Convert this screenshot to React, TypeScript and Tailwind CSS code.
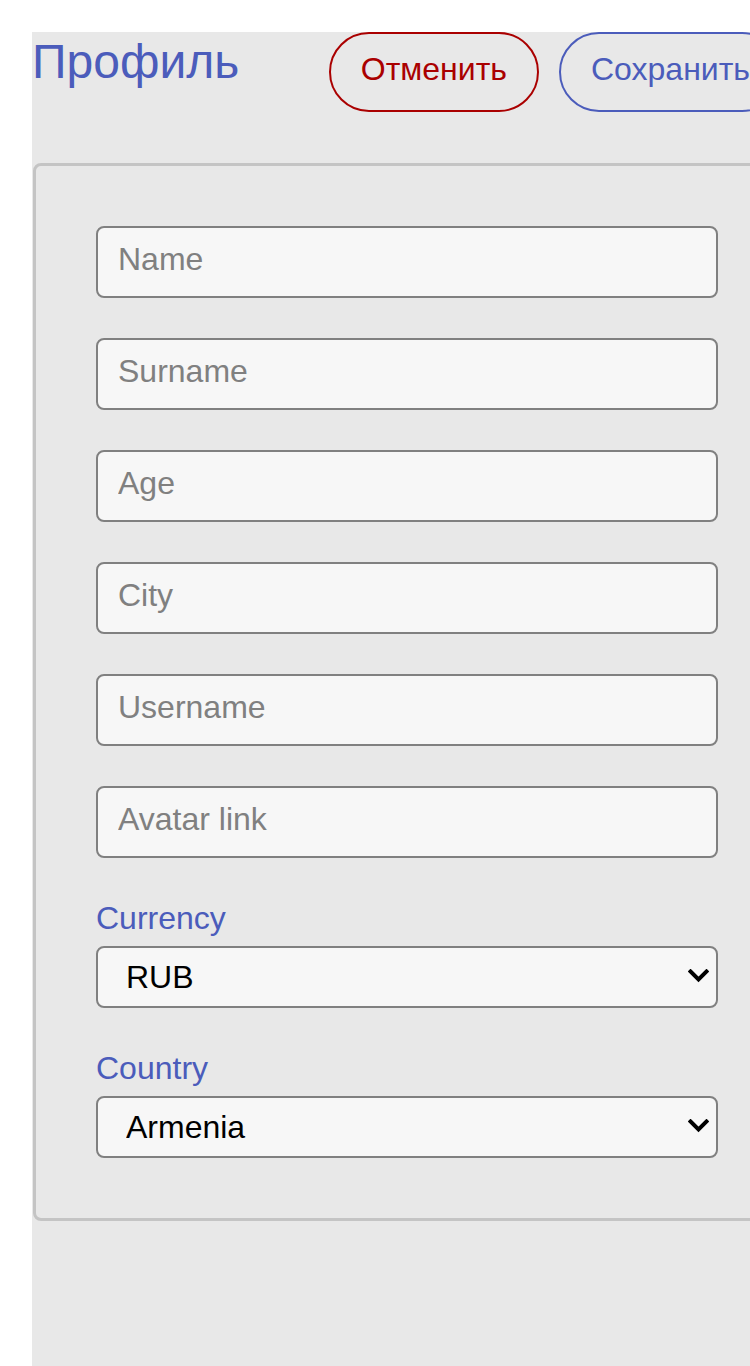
import { useState } from "react";

const FIELDS = ["Name", "Surname", "Age", "City", "Username", "Avatar link"];

const CURRENCIES = ["RUB", "USD", "EUR"];
const COUNTRIES = ["Armenia", "Russia", "Belarus", "Kazakhstan", "Ukraine"];

const inputCls =
  "block w-full h-[72px] rounded-lg border-2 border-[#808080] bg-[#f7f7f7] px-5 pb-[6px] text-[32px] text-black placeholder:text-[#808080] outline-none";

const selectCls =
  "block w-full h-[62px] appearance-none rounded-lg border-2 border-[#808080] bg-[#f7f7f7] pl-7 pr-12 text-[32px] text-black outline-none";

function Chevron() {
  return (
    <svg
      className="pointer-events-none absolute right-[9px] top-[23px] h-[14px] w-[21px]"
      viewBox="0 0 21 14"
      fill="none"
    >
      <path d="M2.5 2.5 L10.5 10.5 L18.5 2.5" stroke="black" strokeWidth="4" strokeLinecap="square" />
    </svg>
  );
}

function SelectField({
  label,
  value,
  options,
  onChange,
}: {
  label: string;
  value: string;
  options: string[];
  onChange: (v: string) => void;
}) {
  return (
    <label className="block pt-[2px]">
      <span className="mb-[9px] block text-[32px] leading-[37px] text-[#4b5cbb]">{label}</span>
      <div className="relative">
        <select value={value} onChange={(e) => onChange(e.target.value)} className={selectCls}>
          {options.map((o) => (
            <option key={o}>{o}</option>
          ))}
        </select>
        <Chevron />
      </div>
    </label>
  );
}

export default function App() {
  const [currency, setCurrency] = useState("RUB");
  const [country, setCountry] = useState("Armenia");

  return (
    <div className="h-screen overflow-hidden bg-white pl-8 pt-8 font-['Liberation_Sans',Arial,sans-serif]">
      <div className="w-[750px] min-h-full bg-[#e8e8e8]">
        {/* Header */}
        <div className="flex items-start justify-between">
          <h1 className="mt-[2px] text-[48px] leading-[1.15] text-[#4b5cbb]">Профиль</h1>
          <div className="flex gap-5">
            <button className="h-[80px] rounded-full border-2 border-[#aa0000] px-[30px] pb-[6px] text-[32px] text-[#aa0000]">
              Отменить
            </button>
            <button className="h-[80px] rounded-full border-2 border-[#4b5cbb] px-[30px] pb-[6px] text-[32px] text-[#4b5cbb]">
              Сохранить
            </button>
          </div>
        </div>

        {/* Form card */}
        <div className="mx-px mt-[51px] rounded-lg border-[3px] border-[#c4c4c4] p-[60px]">
          <div className="flex flex-col gap-10">
            {FIELDS.map((f) => (
              <input key={f} type="text" placeholder={f} className={inputCls} />
            ))}
            <SelectField label="Currency" value={currency} options={CURRENCIES} onChange={setCurrency} />
            <SelectField label="Country" value={country} options={COUNTRIES} onChange={setCountry} />
          </div>
        </div>
      </div>
    </div>
  );
}
